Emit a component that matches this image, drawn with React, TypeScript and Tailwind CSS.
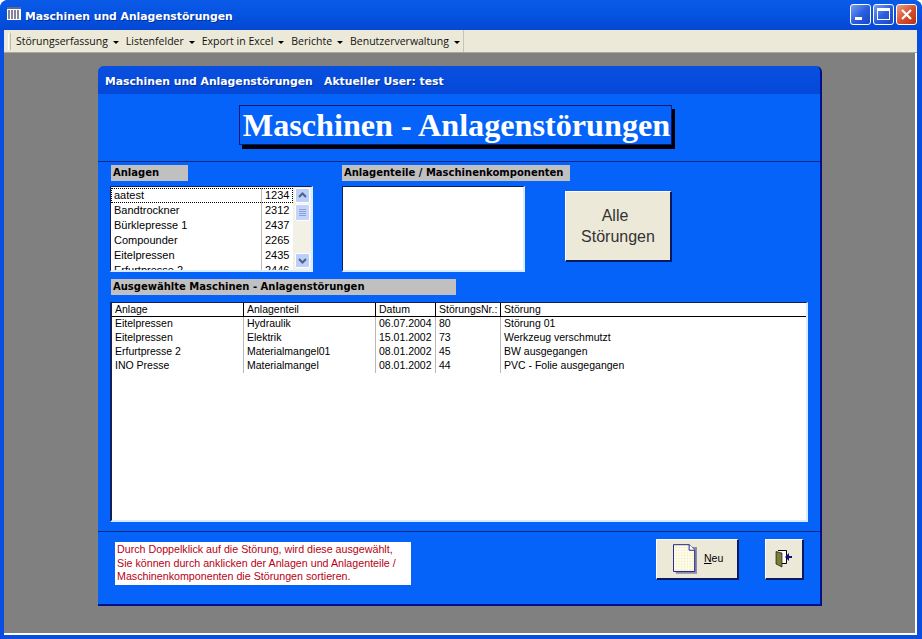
import React from 'react'

const menus = ['Störungserfassung', 'Listenfelder', 'Export in Excel', 'Berichte', 'Benutzerverwaltung']

const anlagen = [
  ['aatest', '1234'],
  ['Bandtrockner', '2312'],
  ['Bürklepresse 1', '2437'],
  ['Compounder', '2265'],
  ['Eitelpressen', '2435'],
  ['Erfurtpresse 2', '2446'],
]

const columns = [
  { name: 'Anlage', w: 'w-[132px]' },
  { name: 'Anlagenteil', w: 'w-[132px]' },
  { name: 'Datum', w: 'w-[60px]' },
  { name: 'StörungsNr.:', w: 'w-[65px]' },
  { name: 'Störung', w: 'flex-1' },
]

const stoerungen = [
  ['Eitelpressen', 'Hydraulik', '06.07.2004', '80', 'Störung 01'],
  ['Eitelpressen', 'Elektrik', '15.01.2002', '73', 'Werkzeug verschmutzt'],
  ['Erfurtpresse 2', 'Materialmangel01', '08.01.2002', '45', 'BW ausgegangen'],
  ['INO Presse', 'Materialmangel', '08.01.2002', '44', 'PVC - Folie ausgegangen'],
]

const WinButton = ({ kind }: { kind: 'min' | 'max' | 'close' }) => (
  <div
    className={`w-[21px] h-[21px] rounded-[3px] border border-white flex items-center justify-center ${
      kind === 'close'
        ? 'bg-gradient-to-br from-[#e8a08a] via-[#d8502f] to-[#b83010]'
        : 'bg-gradient-to-br from-[#7a9cf0] via-[#2a5fe0] to-[#1a44c8]'
    }`}
  >
    {kind === 'min' && <div className="w-[7px] h-[3px] bg-white mt-[8px] mr-[4px]" />}
    {kind === 'max' && (
      <div className="w-[13px] h-[12px] border border-white border-t-[3px]" />
    )}
    {kind === 'close' && (
      <svg width="13" height="13" viewBox="0 0 13 13">
        <path d="M2 2l9 9M11 2l-9 9" stroke="#fff" strokeWidth="2.2" />
      </svg>
    )}
  </div>
)

const ScrollBtn = ({ up }: { up?: boolean }) => (
  <div className="w-[15px] h-[15px] rounded-[2px] border border-white bg-[#bccefa] flex items-center justify-center">
    <svg width="9" height="7" viewBox="0 0 9 7">
      <path d={up ? 'M1 5l3.5-3.5L8 5' : 'M1 2l3.5 3.5L8 2'} fill="none" stroke="#4d6185" strokeWidth="2" />
    </svg>
  </div>
)

const SectionLabel = ({ children, className }: { children: React.ReactNode; className: string }) => (
  <div className={`h-[16px] bg-[#c0c0c0] pl-[2px] text-[10px] leading-[16px] font-bold text-black font-['DejaVu_Sans',sans-serif] whitespace-nowrap ${className}`}>
    {children}
  </div>
)

const PageIcon = () => (
  <svg width="24" height="30" viewBox="0 0 26 32">
    <defs>
      <pattern id="dots" width="3" height="3" patternUnits="userSpaceOnUse">
        <rect width="3" height="3" fill="#fdfce8" />
        <rect width="1" height="1" fill="#e8e2a0" />
      </pattern>
    </defs>
    <path d="M3 3h23v29H3z" fill="#8c8ca8" />
    <path d="M.5.5h17l6 6v23H.5z" fill="url(#dots)" stroke="#14147a" />
    <path d="M17.5.5v6h6" fill="#fff" stroke="#14147a" />
  </svg>
)

const DoorIcon = () => (
  <svg width="18" height="18" viewBox="0 0 18 18">
    <path d="M3 .5h8.500v13H7" fill="#fff" stroke="#000" />
    <path d="M1 1.500l6 1.500v14l-6-3z" fill="#7d7d3a" stroke="#000" strokeWidth="0.6" />
    <path d="M17 6h-3V3l-4 4 4 4V8h3z" fill="#10107a" />
  </svg>
)

export default function App() {
  return (
    <div className="w-[922px] h-[639px] overflow-hidden flex flex-col bg-[#0a4ee0] rounded-t-[8px] font-['Liberation_Sans',sans-serif]">
      {/* Title bar */}
      <div className="h-[30px] shrink-0 flex items-center pl-[7px] pr-[5px] bg-gradient-to-b from-[#0a5ae8] via-[#0553e0] to-[#0448d4]">
        <svg width="14" height="13" viewBox="0 0 14 13" className="mb-[4px]">
          <rect width="14" height="13" fill="#fff" />
          <rect y="0" width="14" height="2" fill="#5a6a9a" />
          <path d="M2 3v9M5 3v9M8 3v9M11 3v9" stroke="#30305a" strokeWidth="1.2" />
        </svg>
        <span className="ml-[4px] mt-[4px] text-white font-bold text-[10.8px] font-['DejaVu_Sans',sans-serif] [text-shadow:1px_1px_0_#0030a0]">
          Maschinen und Anlagenstörungen
        </span>
        <div className="ml-auto flex gap-[2px] mb-[2px]">
          <WinButton kind="min" />
          <WinButton kind="max" />
          <WinButton kind="close" />
        </div>
      </div>

      <div className="flex-1 min-h-0 flex flex-col ml-[4px] mr-[5px]">
        {/* Menu bar */}
        <div className="h-[23px] shrink-0 bg-[#ece9d8] border-b border-[#aca899] flex items-center pl-[4px]">
          <div className="w-[3px] h-[17px] border-l border-white border-r border-r-[#c0bda8] mr-[5px]" />
          {menus.map(m => (
            <div key={m} className="flex items-center mr-[7px] mt-[2px] text-[10.5px] text-[#111] font-['Open_Sans',sans-serif]">
              {m}
              <span className="ml-[5px] mt-[1px] border-x-[3px] border-x-transparent border-t-[3px] border-t-black" />
            </div>
          ))}
          <div className="flex-1 self-stretch ml-[-4px] bg-[#ece9d8] border-l border-[#c8c5b4]" />
        </div>

        {/* MDI area */}
        <div className="flex-1 min-h-0 bg-[#808080] pt-[13px] pl-[94px] border-r-2 border-white">
          <div className="w-[724px] h-[540px] bg-[#0563fa] rounded-t-[6px] border-r-[2px] border-b-[2px] border-[#00108a] flex flex-col">
            {/* Inner title */}
            <div className="h-[28px] shrink-0 rounded-t-[6px] pl-[7px] pt-[8px] bg-gradient-to-b from-[#0a50e0] to-[#0448d8] text-white font-bold text-[10.8px] leading-[15px] font-['DejaVu_Sans',sans-serif] whitespace-pre [text-shadow:1px_1px_0_#0030a0]">
              Maschinen und Anlagenstörungen   Aktueller User: test
            </div>

            {/* Header */}
            <div className="h-[68px] shrink-0 border-b border-[#0a2a80] flex items-start justify-center pt-[11px] pr-[8px]">
              <div className="w-[433px] h-[40px] pl-[3px] bg-[#0563fa] border border-[#0a1a70] shadow-[3px_4px_0_#000] text-center text-white font-bold text-[32.2px] leading-[39px] font-['Liberation_Serif',serif] whitespace-nowrap">
                Maschinen - Anlagenstörungen
              </div>
            </div>

            {/* Upper lists */}
            <div className="flex pl-[12px] pt-[3px] h-[117px] shrink-0">
              <div className="w-[232px] shrink-0">
                <SectionLabel className="w-[77px] ml-[1px]">Anlagen</SectionLabel>
                <div className="mt-[5px] w-[203px] h-[86px] bg-white border-t border-l border-r-2 border-b-2 border-t-[#10205a] border-l-[#10205a] border-r-[#d8ecff] border-b-[#d8ecff] flex overflow-hidden">
                  <div className="flex-1 min-w-0 pt-px text-[11px] leading-[15px] text-black">
                    {anlagen.map(([name, nr], i) => (
                      <div key={nr} className={`flex h-[15px] ${i === 0 ? 'outline-1 outline-dotted outline-black -outline-offset-1' : ''}`}>
                        <div className="w-[151px] pl-[3px] border-r border-[#b8b8b8]">{name}</div>
                        <div className="pl-[3px]">{nr}</div>
                      </div>
                    ))}
                  </div>
                  <div className="w-[18px] shrink-0 bg-[#f3f1e6] flex flex-col items-center py-px">
                    <ScrollBtn up />
                    <div className="w-[15px] h-[17px] mt-px rounded-[2px] border border-white bg-[#c3d3fb] flex flex-col items-center justify-center gap-px">
                      <span className="w-[7px] h-px bg-[#8aa0d8]" />
                      <span className="w-[7px] h-px bg-[#8aa0d8]" />
                      <span className="w-[7px] h-px bg-[#8aa0d8]" />
                      <span className="w-[7px] h-px bg-[#8aa0d8]" />
                    </div>
                    <div className="mt-auto mb-[1px]">
                      <ScrollBtn />
                    </div>
                  </div>
                </div>
              </div>
              <div className="w-[223px] shrink-0">
                <SectionLabel className="w-[228px]">Anlagenteile / Maschinenkomponenten</SectionLabel>
                <div className="mt-[5px] w-[183px] h-[86px] bg-white border-t border-l border-r-2 border-b-2 border-t-[#10205a] border-l-[#10205a] border-r-[#d8ecff] border-b-[#d8ecff]" />
              </div>
              <button className="w-[107px] h-[71px] mt-[26px] bg-[#ece9d8] border-r-2 border-b-2 border-[#0a1a60] border-t border-l border-t-white border-l-white text-[16px] leading-[21px] text-[#333] font-['Liberation_Sans',sans-serif]">
                <span className="mr-[6px]">Alle</span><br />Störungen
              </button>
            </div>

            {/* Selected machines */}
            <div className="pl-[13px]">
              <SectionLabel className="w-[345px]">Ausgewählte Maschinen - Anlagenstörungen</SectionLabel>
            </div>
            <div className="mt-[7px] ml-[12px] w-[698px] h-[220px] bg-white border-t border-l-2 border-r-2 border-b-2 border-t-[#10205a] border-l-[#10205a] border-r-[#d8ecff] border-b-[#d8ecff] text-[10.5px] text-black shrink-0">
              <div className="flex h-[13px] border-b-[1.5px] border-black box-content">
                {columns.map(c => (
                  <div key={c.name} className={`${c.w} pl-[3px] leading-[13px] border-r border-black last:border-r-0 whitespace-nowrap overflow-hidden`}>
                    {c.name}
                  </div>
                ))}
              </div>
              {stoerungen.map(row => (
                <div key={row[0] + row[3]} className="flex h-[14px]">
                  {row.map((cell, i) => (
                    <div key={i} className={`${columns[i].w} pl-[3px] leading-[12px] border-r border-[#b8b8b8] last:border-r-0 whitespace-nowrap`}>
                      {cell}
                    </div>
                  ))}
                </div>
              ))}
            </div>

            {/* Footer */}
            <div className="mt-[9px] flex-1 border-t border-[#0a2a80] flex items-start pl-[17px] pt-[10px]">
              <div className="w-[296px] h-[43px] bg-white text-[10.7px] leading-[13.500px] text-[#b80014] pl-[2px] pt-px whitespace-nowrap">
                Durch Doppelklick auf die Störung, wird diese ausgewählt,<br />
                Sie können durch anklicken der Anlagen und Anlagenteile /<br />
                Maschinenkomponenten die Störungen sortieren.
              </div>
              <button className="ml-[245px] mt-[-3px] w-[83px] h-[41px] bg-[#ece9d8] border-t border-l border-white border-r-2 border-b-2 border-r-[#0a1a60] border-b-[#0a1a60] flex items-center justify-start pl-[16px] text-[10.5px] text-black">
                <PageIcon />
                <span className="ml-[7px]"><span className="underline">N</span>eu</span>
              </button>
              <button className="ml-[26px] mt-[-3px] w-[39px] h-[41px] bg-[#ece9d8] border-t border-l border-white border-r-2 border-b-2 border-r-[#0a1a60] border-b-[#0a1a60] flex items-center justify-center">
                <DoorIcon />
              </button>
            </div>
          </div>
        </div>
        <div className="h-[2px] shrink-0 bg-white" />
      </div>
      <div className="h-[4px] shrink-0" />
    </div>
  )
}
